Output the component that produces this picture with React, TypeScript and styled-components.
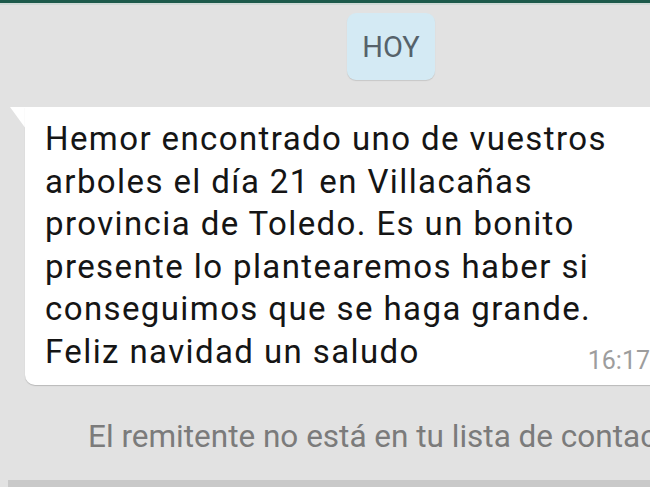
import styled, { createGlobalStyle } from 'styled-components';

const GlobalStyle = createGlobalStyle`
    html, body {
        margin: 0;
        padding: 0;
        background: #e2e2e2;
        overflow: hidden;
    }
`

const Screen = styled.div`
    display: flex;
    flex-direction: column;
    width: 650px;
    height: 487px;
    overflow: hidden;
    background: #e2e2e2;
    font-family: Roboto, "Noto Sans", sans-serif;
`

const StatusBar = styled.div`
    height: 3px;
    background: #1d5a4b;
    border-bottom: 2px solid #cfd9d6;
    flex-shrink: 0;
`

const DateRow = styled.div`
    display: flex;
    padding: 8px 0 0 347px;
`

const DateBadge = styled.div`
    display: flex;
    align-items: center;
    justify-content: center;
    width: 88px;
    height: 67px;
    border-radius: 9px;
    background: #d4eaf4;
    box-shadow: 0 1px 1px rgba(0, 0, 0, 0.12);
    color: #56626a;
    font-family: "Liberation Sans Narrow", Roboto, sans-serif;
    font-size: 29px;
`

const Conversation = styled.div`
    display: flex;
    padding: 27px 0 0 10px;
`

const Tail = styled.svg`
    flex-shrink: 0;
    width: 16px;
    height: 22px;
    margin-right: -1px;
`

const Bubble = styled.div`
    box-sizing: border-box;
    width: 660px;
    flex-shrink: 0;
    padding: 11px 0 12px 20px;
    background: #ffffff;
    border-radius: 0 0 0 10px;
    box-shadow: 0 1px 1px rgba(0, 0, 0, 0.18);
    color: #151515;
    font-size: 33px;
    letter-spacing: 1.4px;
    line-height: 42.5px;
`

const MessageText = styled.div`
    white-space: pre-line;
`

const LastRow = styled.div`
    display: flex;
`

const Time = styled.span`
    align-self: flex-end;
    margin: 0 35px 0 auto;
    color: #9d9d9d;
    font-size: 25px;
    letter-spacing: 0;
    line-height: 25px;
`

const Notice = styled.div`
    padding: 33px 0 0 88px;
    color: #7b7b7b;
    font-family: "Liberation Sans Narrow", Roboto, sans-serif;
    font-size: 31.5px;
    white-space: nowrap;
`

const BottomBar = styled.div`
    margin-top: auto;
    margin-left: 8px;
    height: 7px;
    background: #c9c9c9;
`

const message = `Hemor encontrado uno de vuestros
arboles el día 21 en Villacañas
provincia de Toledo. Es un bonito
presente lo plantearemos haber si
conseguimos que se haga grande.`

export default function App() {
    return (
        <Screen>
            <GlobalStyle />
            <StatusBar />
            <DateRow>
                <DateBadge>HOY</DateBadge>
            </DateRow>
            <Conversation>
                <Tail viewBox="0 0 16 22">
                    <path d="M0 0 H16 V22 Z" fill="#ffffff" />
                </Tail>
                <Bubble>
                    <MessageText>{message}</MessageText>
                    <LastRow>
                        <span>Feliz navidad un saludo</span>
                        <Time>16:17</Time>
                    </LastRow>
                </Bubble>
            </Conversation>
            <Notice>El remitente no está en tu lista de contactos</Notice>
            <BottomBar />
        </Screen>
    )
}
